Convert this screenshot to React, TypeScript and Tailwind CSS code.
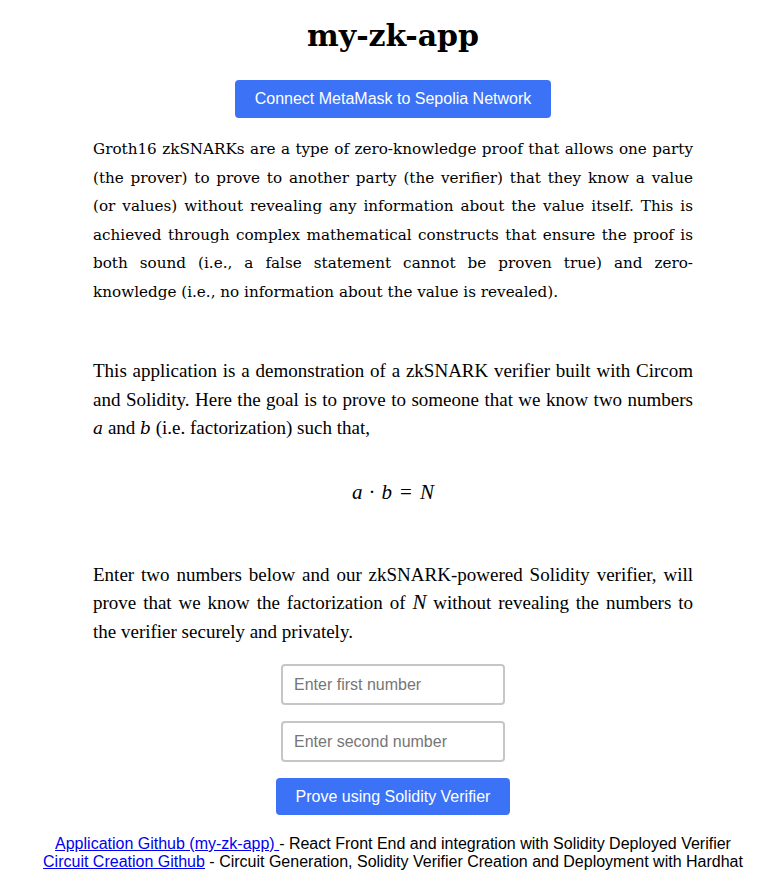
export default function App() {
  const sans = "font-['Liberation_Sans',Arial,sans-serif]";
  return (
    <div className="min-h-screen bg-white pl-[22px] text-black">
      <div className="flex flex-col items-center pt-[18px]">
        <h1 className="font-['DejaVu_Serif',Georgia,serif] text-[30px] font-bold leading-[36px]">
          my-zk-app
        </h1>

        <button
          type="button"
          className={`${sans} mt-[26px] h-[38px] w-[316px] rounded-[4px] bg-[#3b72f6] text-[16px] text-white`}
        >
          Connect MetaMask to Sepolia Network
        </button>

        <div className="mt-[17px] w-[600px]">
          <p className="text-justify font-['DejaVu_Serif',Georgia,serif] text-[15.2px] leading-[28.5px]">
            Groth16 zkSNARKs are a type of zero-knowledge proof that allows one party (the prover) to prove
            to another party (the verifier) that they know a value (or values) without revealing any
            information about the value itself. This is achieved through complex mathematical constructs
            that ensure the proof is both sound (i.e., a false statement cannot be proven true) and
            zero-knowledge (i.e., no information about the value is revealed).
          </p>

          <p className="mt-[51px] text-justify font-['Liberation_Serif','Times_New_Roman',serif] text-[19px] leading-[28.5px]">
            This application is a demonstration of a zkSNARK verifier built with Circom and Solidity.
            Here the goal is to prove to someone that we know two numbers{" "}
            <span className="font-['DejaVu_Serif',serif] text-[17px] italic leading-none">a</span> and{" "}
            <span className="font-['DejaVu_Serif',serif] text-[17px] italic leading-none">b</span> (i.e.
            factorization) such that,
          </p>

          <div className="mt-[35px] flex justify-center font-['Liberation_Serif',serif] text-[21px] leading-[28px]">
            <span className="italic">a</span>
            <span className="mx-[6px]">·</span>
            <span className="italic">b</span>
            <span className="mx-[8px]">=</span>
            <span className="italic">N</span>
          </div>

          <p className="mt-[55px] text-justify font-['Liberation_Serif','Times_New_Roman',serif] text-[19px] leading-[28.5px]">
            Enter two numbers below and our zkSNARK-powered Solidity verifier, will prove that we know the
            factorization of{" "}
            <span className="font-['Liberation_Serif',serif] text-[21px] italic leading-none">N</span> without
            revealing the numbers to the verifier securely and privately.
          </p>
        </div>

        <div className={`${sans} mt-[18px] flex flex-col items-center`}>
          <input
            placeholder="Enter first number"
            className="h-[41px] w-[224px] rounded-[4px] border-2 border-[#c6c6c6] px-[11px] text-[16px] placeholder:text-[#767676] outline-none"
          />
          <input
            placeholder="Enter second number"
            className="mt-[16px] h-[41px] w-[224px] rounded-[4px] border-2 border-[#c6c6c6] px-[11px] text-[16px] placeholder:text-[#767676] outline-none"
          />
          <button
            type="button"
            className="mt-[16px] h-[37px] w-[234px] rounded-[4px] bg-[#3b72f6] text-[16px] text-white"
          >
            Prove using Solidity Verifier
          </button>
        </div>

        <div className={`${sans} mt-[20px] text-center text-[16px] leading-[18px]`}>
          <div>
            <a href="#" className="text-[#0000ee] underline">
              Application Github (my-zk-app){" "}
            </a>
            - React Front End and integration with Solidity Deployed Verifier
          </div>
          <div>
            <a href="#" className="text-[#0000ee] underline">
              Circuit Creation Github
            </a>{" "}
            - Circuit Generation, Solidity Verifier Creation and Deployment with Hardhat
          </div>
        </div>
      </div>
    </div>
  );
}
